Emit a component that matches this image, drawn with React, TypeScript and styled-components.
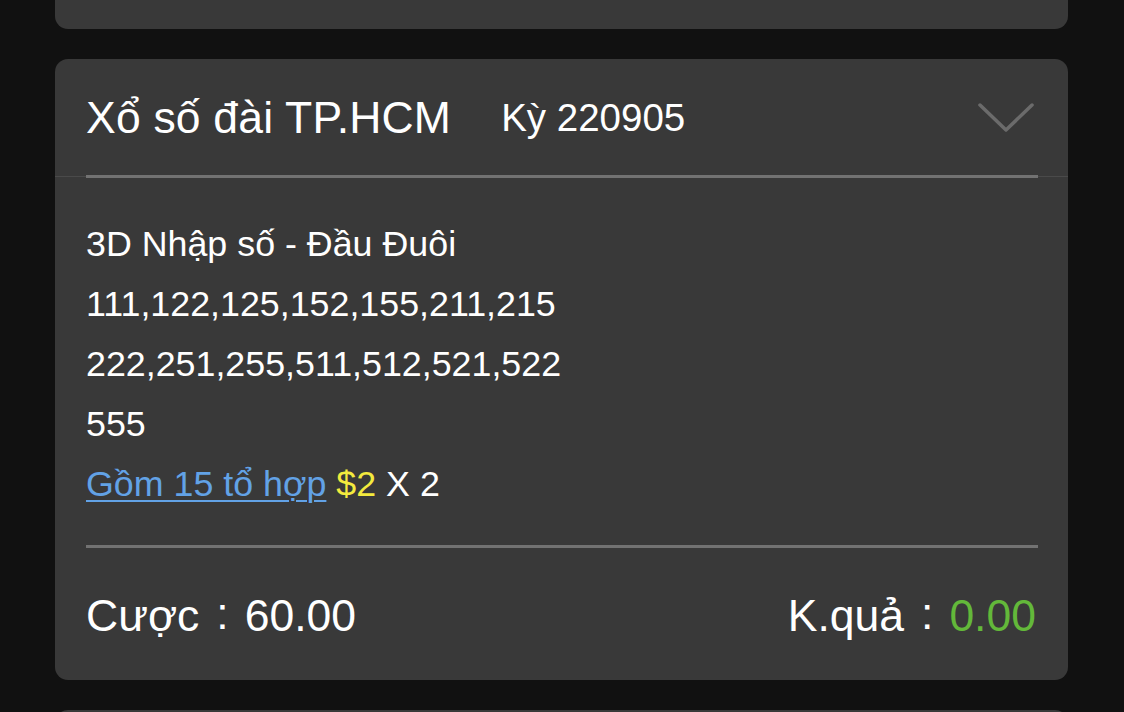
import React from 'react';
import styled, { createGlobalStyle } from 'styled-components';

const GlobalStyle = createGlobalStyle`
  html, body {
    margin: 0;
    padding: 0;
    background: #111111;
  }
  body {
    font-family: 'Liberation Sans', Arial, 'Noto Sans CJK TC', sans-serif;
    color: #ffffff;
  }
`;

const Page = styled.div`
  height: 712px;
  overflow: hidden;
`;

const List = styled.div`
  display: flex;
  flex-direction: column;
  gap: 30px;
  padding: 0 56px 0 55px;
  margin-top: -71px;
`;

const Card = styled.div<{ $height?: number }>`
  background: #393939;
  border-radius: 13px;
  ${p => (p.$height ? `height: ${p.$height}px;` : '')}
`;

const Header = styled.div`
  height: 117px;
  display: flex;
  align-items: center;
  padding: 0 34px 0 31px;
  border-bottom: 1px solid #4a4a4a;
  position: relative;
`;

const Title = styled.span`
  font-size: 44.5px;
  letter-spacing: 0.2px;
`;

const Period = styled.span`
  font-size: 38.5px;
  margin-left: 50px;
  flex: 1;
`;

const HeaderRule = styled.div`
  position: absolute;
  left: 31px;
  right: 30px;
  bottom: -2px;
  height: 3px;
  background: #727272;
`;

const Body = styled.div`
  padding: 37px 31px 31px;
  font-size: 35.8px;
  line-height: 60px;
`;

const Line = styled.div``;

const Link = styled.span`
  color: #62a2e6;
  text-decoration: underline;
  text-underline-offset: 4px;
  text-decoration-thickness: 2px;
`;

const Money = styled.span`
  color: #f3ea3e;
`;

const Divider = styled.div`
  height: 3px;
  background: #727272;
  margin: 0 30px 0 31px;
`;

const Footer = styled.div`
  height: 128px;
  display: flex;
  align-items: center;
  justify-content: space-between;
  padding: 4px 32px 0 31px;
  font-size: 44.5px;
`;

const Stat = styled.span``;

const Colon = styled.span`
  display: inline-block;
  margin: 0 16px 0 17px;
  transform: translateY(-2px);
`;

const Result = styled.span`
  color: #63b83a;
`;

const Chevron = () => (
  <svg width="56" height="32" viewBox="0 0 56 32" fill="none">
    <polyline
      points="2,3 28,28 54,3"
      stroke="#6b6b6b"
      strokeWidth="3.5"
      strokeLinecap="round"
      strokeLinejoin="round"
    />
  </svg>
);

const App: React.FC = () => (
  <Page>
    <GlobalStyle />
    <List>
      <Card $height={100} />
      <Card>
        <Header>
          <Title>Xổ số đài TP.HCM</Title>
          <Period>Kỳ 220905</Period>
          <Chevron />
          <HeaderRule />
        </Header>
        <Body>
          <Line>3D Nhập số - Đầu Đuôi</Line>
          <Line>111,122,125,152,155,211,215</Line>
          <Line>222,251,255,511,512,521,522</Line>
          <Line>555</Line>
          <Line>
            <Link>Gồm 15 tổ hợp</Link> <Money>$2</Money> X 2
          </Line>
        </Body>
        <Divider />
        <Footer>
          <Stat>
            Cược<Colon>:</Colon>60.00
          </Stat>
          <Stat>
            K.quả<Colon>:</Colon>
            <Result>0.00</Result>
          </Stat>
        </Footer>
      </Card>
      <Card $height={200} />
    </List>
  </Page>
);

export default App;
